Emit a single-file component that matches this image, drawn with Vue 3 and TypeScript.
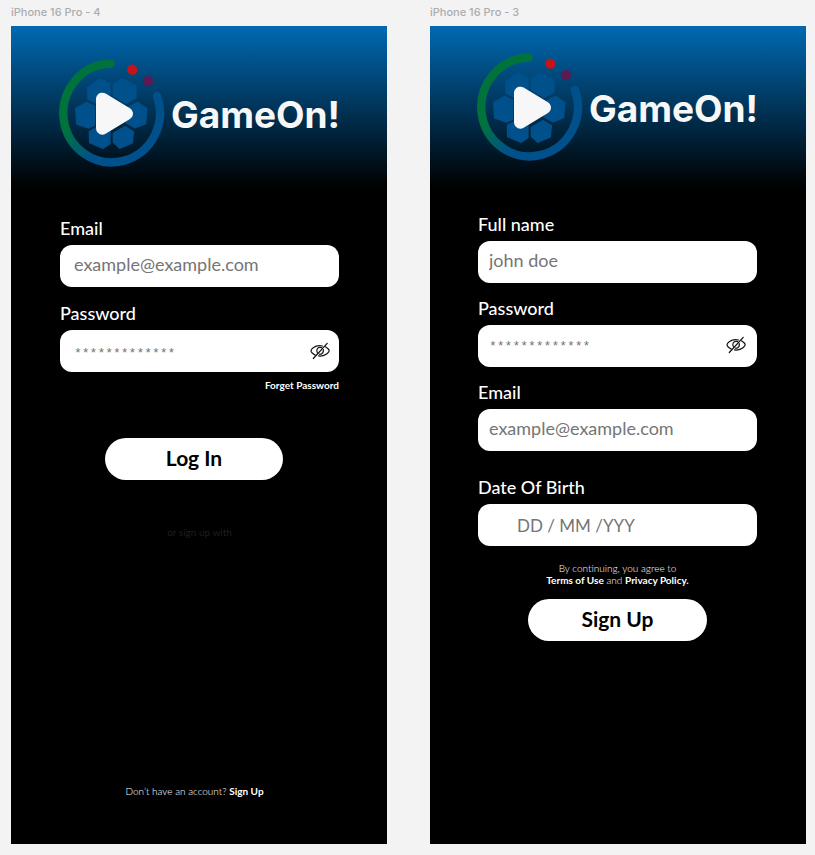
<script setup lang="ts">
import { ref } from 'vue'

interface Field {
  id: string
  label: string
  type: string
  placeholder: string
  kind?: 'secret' | 'date'
}

interface Screen {
  id: string
  caption: string
  fields: Field[]
}

const stars = '*'.repeat(13)

const screens: Screen[] = [
  {
    id: 'login',
    caption: 'iPhone 16 Pro - 4',
    fields: [
      { id: 'login-email', label: 'Email', type: 'email', placeholder: 'example@example.com' },
      { id: 'login-password', label: 'Password', type: 'password', placeholder: stars, kind: 'secret' },
    ],
  },
  {
    id: 'signup',
    caption: 'iPhone 16 Pro - 3',
    fields: [
      { id: 'signup-name', label: 'Full name', type: 'text', placeholder: 'john doe' },
      { id: 'signup-password', label: 'Password', type: 'password', placeholder: stars, kind: 'secret' },
      { id: 'signup-email', label: 'Email', type: 'email', placeholder: 'example@example.com' },
      { id: 'signup-birth', label: 'Date Of Birth', type: 'text', placeholder: 'DD / MM /YYY', kind: 'date' },
    ],
  },
]

const revealed = ref<Record<string, boolean>>({})

function toggle(id: string) {
  revealed.value[id] = !revealed.value[id]
}

function inputType(field: Field): string {
  return revealed.value[field.id] ? 'text' : field.type
}
</script>

<template>
  <main class="board">
    <section v-for="screen in screens" :key="screen.id" class="artboard">
      <h2 class="caption">{{ screen.caption }}</h2>
      <div class="phone" :class="screen.id">
        <header class="brand">
          <svg class="mark" viewBox="18 18 330 336" aria-hidden="true">
            <defs>
              <linearGradient :id="screen.id + '-ring'" gradientUnits="userSpaceOnUse" x1="50" y1="235" x2="140" y2="300">
                <stop offset="0" stop-color="#00733d" />
                <stop offset="1" stop-color="#00508c" />
              </linearGradient>
            </defs>
            <path
              d="M182 41 A145 148 0 1 0 321 138"
              fill="none"
              :stroke="`url(#${screen.id}-ring)`"
              stroke-width="25"
              stroke-linecap="round"
            />
            <circle cx="247" cy="59" r="15.500" fill="#c4141b" />
            <circle cx="294" cy="93" r="15.500" fill="#5b1b55" />
            <g fill="#00508c" stroke="#00508c" stroke-width="4" stroke-linejoin="round">
              <path d="M113 114 L144 91 Q152 86 160 90 L180 104 V138 L142 160 L114 148 Z" />
              <path d="M190 104 L210 90 Q216 86 224 89 L258 108 V144 L228 160 L190 138 Z" />
              <path d="M77 175 L110 157 L134 168 V226 L116 234 L80 222 Z" />
              <path d="M262 157 L290 175 L287 221 L255 234 L228 218 L234 172 Z" />
              <path d="M118 244 L136 234 L180 240 V281 L159 295 L119 278 Z" />
              <path d="M190 250 L225 230 L250 245 L247 279 L209 295 L190 277 Z" />
            </g>
            <path
              d="M157 147 V235 L230 191 Z"
              fill="#f7f7f7"
              stroke="#f7f7f7"
              stroke-width="38"
              stroke-linejoin="round"
            />
          </svg>
          <h1 class="name">GameOn!</h1>
        </header>

        <form class="form" @submit.prevent>
          <div v-for="field in screen.fields" :key="field.id" class="field" :class="field.kind">
            <label :for="field.id">{{ field.label }}</label>
            <div class="box">
              <input :id="field.id" :type="inputType(field)" :placeholder="field.placeholder" />
              <button
                v-if="field.kind === 'secret'"
                type="button"
                class="eye"
                aria-label="Show password"
                @click="toggle(field.id)"
              >
                <svg viewBox="0 0 22 18" fill="none" stroke="currentColor" stroke-width="1.200" stroke-linecap="round">
                  <path d="M13.500 4 Q8 3 4.500 5.600 Q2 7.400 2 9 Q2 10.700 6.500 13.200" />
                  <path d="M9.500 13.900 Q14.500 14.600 18 11.800 Q20.200 10 20.200 8.800 Q20 7 16.500 4.800" />
                  <path d="M12.600 5.700 Q9.500 4.800 8.200 7 Q7.100 9.300 8.600 11.200" />
                  <path d="M14.300 7.600 Q14.800 10.500 12.500 11.900 Q11.500 12.400 10.400 12.200" />
                  <path d="M4.300 16.500 L18.200 1.300" />
                </svg>
              </button>
            </div>
          </div>

          <template v-if="screen.id === 'login'">
            <a class="forgot" href="#">Forget Password</a>
            <button type="submit" class="submit">Log In</button>
            <p class="divider">or sign up with</p>
          </template>
          <template v-else>
            <p class="terms">
              By continuing, you agree to<br />
              <a href="#">Terms of Use</a> and <a href="#">Privacy Policy.</a>
            </p>
            <button type="submit" class="submit">Sign Up</button>
          </template>
        </form>

        <footer v-if="screen.id === 'login'" class="foot">
          Don’t have an account? <a href="#">Sign Up</a>
        </footer>
      </div>
    </section>
  </main>
</template>

<style>
body {
  background: #f3f3f3;
}
</style>

<style scoped>
* {
  box-sizing: border-box;
}

.board {
  display: grid;
  grid-template-columns: 1fr 1fr;
  gap: 43px;
  min-height: 100vh;
  padding: 0 9px 11px 11px;
  font-family: Lato, "Open Sans", sans-serif;
}

.artboard {
  display: flex;
  flex-direction: column;
  min-width: 0;
}

.caption {
  margin: 0;
  height: 26px;
  font: 500 11px/24px Inter, sans-serif;
  color: #acacac;
}

.phone {
  flex: 1;
  display: flex;
  flex-direction: column;
  padding: 30px 48px 45px 49px;
  background: linear-gradient(#0069b2, #000 162px) #000;
  color: #fff;
}

.signup {
  padding: 24px 49px 45px 48px;
}

.brand {
  display: flex;
  align-items: center;
  gap: 5px;
  margin: 0 -4px;
}

.mark {
  flex: none;
  width: 110px;
  height: 112px;
}

.name {
  margin: 0;
  padding-top: 6px;
  font: 700 37px/48px Inter, sans-serif;
  color: #f7f7f7;
}

.form {
  display: flex;
  flex-direction: column;
  gap: 16px;
  margin-top: 50px;
}

.signup .form {
  gap: 15px;
  margin-top: 52px;
}

.field {
  display: flex;
  flex-direction: column;
  gap: 7px;
}

.date {
  margin-top: 11px;
}

label {
  font-size: 18px;
  font-weight: 500;
  line-height: 20px;
}

.box {
  position: relative;
  display: flex;
}

input {
  width: 100%;
  height: 42px;
  padding: 0 11px 4px;
  border: 0;
  border-radius: 12px;
  background: #fff;
  color: #222;
  font: 400 18px/24px Lato, "Open Sans", sans-serif;
}

.login input {
  padding-left: 14px;
}

input::placeholder {
  color: #757575;
  opacity: 1;
}

.secret input {
  padding-top: 4px;
  padding-right: 48px;
  padding-bottom: 0;
  font-family: "Liberation Mono", monospace;
  font-size: 13px;
}

.signup .secret input {
  padding-top: 0;
}

.date input {
  padding-bottom: 0;
  padding-left: 39px;
  font-size: 17px;
}

.eye {
  position: absolute;
  top: 12px;
  right: 8px;
  width: 22px;
  height: 18px;
  padding: 0;
  border: 0;
  background: none;
  color: #111;
}

.signup .eye {
  top: 11px;
  right: 10px;
}

.eye svg {
  display: block;
}

a {
  color: #fff;
  font-weight: 700;
  text-decoration: none;
}

.forgot {
  align-self: flex-end;
  margin-top: -11px;
  font-size: 10px;
  line-height: 16px;
}

.submit {
  align-self: center;
  width: 64%;
  height: 42px;
  padding: 0 0 2px;
  border: 0;
  border-radius: 21px;
  background: #fff;
  color: #000;
  font: 700 21px/24px Lato, "Open Sans", sans-serif;
}

.login .submit {
  margin: 29px 11px 0 0;
}

.divider {
  margin: 28px 0 0;
  font-size: 10px;
  line-height: 16px;
  text-align: center;
  color: #1f1f1f;
}

.terms {
  margin: 1px 0 -2px;
  font-size: 10px;
  font-weight: 300;
  line-height: 12px;
  text-align: center;
}

.foot {
  margin-top: auto;
  padding-right: 10px;
  font-size: 10px;
  font-weight: 300;
  line-height: 16px;
  text-align: center;
}
</style>
